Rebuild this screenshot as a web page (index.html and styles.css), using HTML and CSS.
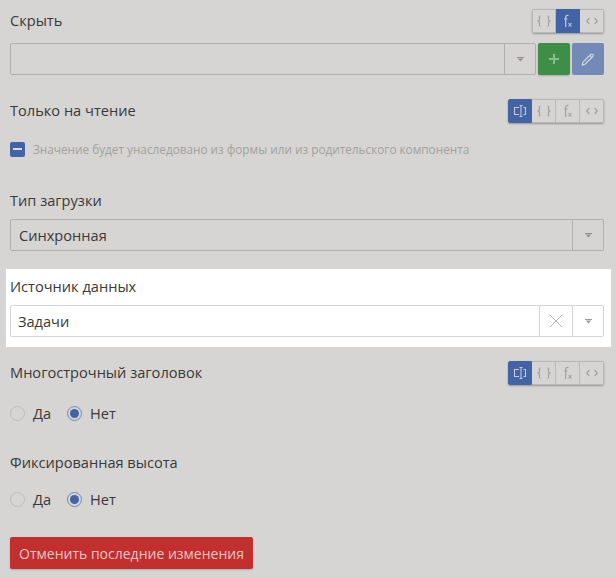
FILE: index.html
```html
<!DOCTYPE html>
<html lang="ru">
<head>
<meta charset="utf-8">
<title>Настройки</title>
<link rel="stylesheet" href="styles.css">
</head>
<body>
<svg class="defs" width="0" height="0" aria-hidden="true">
  <symbol id="i-comp" viewBox="0 0 24 24"><path d="M11 8.500H6.500V15.500H11M11.500 6.500H13M13 6.500H14.500M13 6.500V17.500M11.500 17.500H14.500M15.500 8.500H17.500V15.500H15.500" fill="none" stroke="currentColor" stroke-width="1.100"/></symbol>
  <symbol id="i-braces" viewBox="0 0 24 24"><path d="M8.500 7C7 7 7.500 8.800 7.500 10.200S7.500 11.500 6.300 12C7.500 12.500 7.500 12.400 7.500 13.800S7 17 8.500 17M15.500 7C17 7 16.500 8.800 16.500 10.200S16.500 11.500 17.700 12C16.500 12.500 16.500 12.400 16.500 13.800S17 17 15.500 17" fill="none" stroke="currentColor" stroke-width="1.200"/></symbol>
  <symbol id="i-fx" viewBox="0 0 24 24"><path d="M12.500 6.500C10.500 6.200 9.700 6.800 9.700 8.300V18M8 10H11.500" fill="none" stroke="currentColor" stroke-width="1.200"/><path d="M12.500 14L15.500 17.500M15.500 14L12.500 17.500" fill="none" stroke="currentColor" stroke-width="1.100"/></symbol>
  <symbol id="i-code" viewBox="0 0 24 24"><path d="M9.300 9L6.800 12L9.300 15M14.700 9L17.200 12L14.700 15" fill="none" stroke="currentColor" stroke-width="1.200"/></symbol>
  <symbol id="i-caret" viewBox="0 0 7 5"><path d="M0 0H7V1H0ZM.8 1.600H6.200L3.500 4.600Z" fill="currentColor"/></symbol>
</svg>
<main class="form">
  <section class="field field-hide">
    <div class="head">
      <span class="label">Скрыть</span>
      <div class="modes">
        <button class="mode"><svg class="glyph"><use href="#i-braces"/></svg></button>
        <button class="mode active"><svg class="glyph"><use href="#i-fx"/></svg></button>
        <button class="mode"><svg class="glyph"><use href="#i-code"/></svg></button>
      </div>
    </div>
    <div class="input-row">
      <div class="select">
        <span class="value"></span>
        <span class="cell"><svg class="caret"><use href="#i-caret"/></svg></span>
      </div>
      <button class="square green"><svg class="square-icon" viewBox="0 0 16 16"><path d="M8 3V13M3 8H13" fill="none" stroke="currentColor" stroke-width="2"/></svg></button>
      <button class="square blue"><svg class="square-icon" viewBox="0 0 16 16"><path d="M3 11.200L10.700 3.500C11.300 2.900 12.200 2.900 12.800 3.500C13.400 4.100 13.400 5 12.800 5.600L5 13.200L2.300 13.900ZM9.700 4.500L11.800 6.600" fill="none" stroke="currentColor" stroke-width="1.100"/></svg></button>
    </div>
  </section>

  <section class="field field-readonly">
    <div class="head">
      <span class="label">Только на чтение</span>
      <div class="modes">
        <button class="mode active"><svg class="glyph"><use href="#i-comp"/></svg></button>
        <button class="mode"><svg class="glyph"><use href="#i-braces"/></svg></button>
        <button class="mode"><svg class="glyph"><use href="#i-fx"/></svg></button>
        <button class="mode"><svg class="glyph"><use href="#i-code"/></svg></button>
      </div>
    </div>
    <div class="inherit">
      <span class="check"></span>
      <span class="hint">Значение будет унаследовано из формы или из родительского компонента</span>
    </div>
  </section>

  <section class="field field-load">
    <div class="label-line"><span class="label">Тип загрузки</span></div>
    <div class="select">
      <span class="value">Синхронная</span>
      <span class="cell"><svg class="caret"><use href="#i-caret"/></svg></span>
    </div>
  </section>

  <section class="highlight">
    <div class="label-line"><span class="label">Источник данных</span></div>
    <div class="select select-light">
      <span class="value value-tight">Задачи</span>
      <span class="cell cell-wide"><svg class="cross" viewBox="0 0 14 14"><path d="M1 1L13 13M13 1L1 13" fill="none" stroke="currentColor" stroke-width="1"/></svg></span>
      <span class="cell"><svg class="caret"><use href="#i-caret"/></svg></span>
    </div>
  </section>

  <section class="field field-multi">
    <div class="head">
      <span class="label">Многострочный заголовок</span>
      <div class="modes">
        <button class="mode active"><svg class="glyph"><use href="#i-comp"/></svg></button>
        <button class="mode"><svg class="glyph"><use href="#i-braces"/></svg></button>
        <button class="mode"><svg class="glyph"><use href="#i-fx"/></svg></button>
        <button class="mode"><svg class="glyph"><use href="#i-code"/></svg></button>
      </div>
    </div>
    <div class="radios">
      <span class="radio-item"><span class="radio"></span>Да</span>
      <span class="radio-item"><span class="radio on"></span>Нет</span>
    </div>
  </section>

  <section class="field field-fixed">
    <div class="label-line"><span class="label">Фиксированная высота</span></div>
    <div class="radios">
      <span class="radio-item"><span class="radio"></span>Да</span>
      <span class="radio-item"><span class="radio on"></span>Нет</span>
    </div>
  </section>

  <button class="revert">Отменить последние изменения</button>
</main>
</body>
</html>
```
FILE: styles.css
```css
* { box-sizing: border-box; }
html, body { margin: 0; padding: 0; }
body {
  width: 616px;
  height: 578px;
  overflow: hidden;
  background: #d6d5d3;
  color: #393939;
  font-family: "Open Sans", "Liberation Sans", sans-serif;
  font-size: 14.6px;
}
.defs { position: absolute; }
button { font-family: inherit; padding: 0; margin: 0; }
.form {
  display: flex;
  flex-direction: column;
  padding: 9px 12px 0 10px;
}
.head {
  display: flex;
  justify-content: space-between;
  align-items: center;
  height: 24px;
}
.label { font-size: 14.6px; line-height: 22px; padding-bottom: 2px; }
.label-line { height: 24px; display: flex; align-items: center; }
.modes {
  display: flex;
  box-shadow: 0 1px 2px rgba(0, 0, 0, .3);
  border-radius: 2px;
}
.mode {
  width: 24px;
  height: 24px;
  background: #d6d5d3;
  border: 1px solid #b8b7b5;
  border-left-width: 0;
  color: #a0a09f;
  display: flex;
  align-items: center;
  justify-content: center;
}
.mode:first-child { border-left-width: 1px; border-radius: 2px 0 0 2px; }
.mode:last-child { border-radius: 0 2px 2px 0; }
.mode.active {
  background: #4463a4;
  border-color: #4463a4;
  color: #c3cbdd;
}
.glyph { width: 24px; height: 24px; flex: none; }
.input-row {
  display: flex;
  gap: 2px;
  margin-top: 10px;
}
.input-row .select { flex: 1; }
.select {
  display: flex;
  height: 32px;
  border: 1px solid #b0afad;
  border-radius: 2px;
  align-items: stretch;
}
.value {
  flex: 1;
  padding-left: 8px;
  font-size: 14.6px;
  line-height: 31px;
}
.value-tight { padding-left: 7px; }
.cell {
  width: 31px;
  border-left: 1px solid #b0afad;
  display: flex;
  align-items: center;
  justify-content: center;
  color: #8f8f8e;
}
.cell-wide { width: 33px; }
.caret { width: 7px; height: 5px; }
.cross { width: 14px; height: 14px; color: #b4b4b4; }
.square {
  width: 32px;
  height: 32px;
  border: 0;
  border-radius: 2px;
  display: flex;
  align-items: center;
  justify-content: center;
  box-shadow: 0 1px 2px rgba(0, 0, 0, .2);
}
.square-icon { width: 16px; height: 16px; }
.green { background: #3e8e47; color: #8dbb92; }
.blue { background: #7389b6; color: #d5dbe8; box-shadow: none; }
.field-readonly { margin-top: 24px; }
.inherit {
  display: flex;
  align-items: center;
  margin-top: 18px;
  height: 16px;
}
.check {
  width: 15px;
  height: 15px;
  border-radius: 2px;
  background: #4463a4;
  position: relative;
  margin-right: 8px;
}
.check::after {
  content: "";
  position: absolute;
  left: 3px;
  right: 3px;
  top: 6px;
  height: 2px;
  background: #d7dcea;
}
.hint { font-size: 11.77px; color: #a1a1a0; }
.field-load { margin-top: 32px; }
.field-load .select { margin-top: 6px; }
.highlight {
  margin: 18px -7px 0 -4px;
  padding: 5px 7px 10px 4px;
  background: #fff;
}
.highlight .label-line { padding-top: 2px; }
.highlight .select { margin-top: 7px; }
.select-light { border-color: #d4d4d4; }
.select-light .cell { border-left-color: #d4d4d4; color: #9a9a9a; }
.field-multi { margin-top: 14px; }
.radios {
  display: flex;
  align-items: center;
  gap: 16px;
  height: 24px;
  margin-top: 16px;
}
.radio-item { display: flex; align-items: center; gap: 8px; font-size: 14.6px; }
.radio {
  width: 15px;
  height: 15px;
  border-radius: 50%;
  border: 1px solid #bdbcba;
}
.radio.on {
  border-color: #6f88ba;
  position: relative;
}
.radio.on::after {
  content: "";
  position: absolute;
  left: 2px;
  top: 2px;
  width: 9px;
  height: 9px;
  border-radius: 50%;
  background: #4463a4;
}
.field-fixed { margin-top: 26px; }
.field-fixed .radios { margin-top: 12px; }
.revert {
  align-self: flex-start;
  width: 243px;
  height: 32px;
  margin-top: 26px;
  border: 0;
  border-radius: 2px;
  background: #c12f2f;
  color: #e9c4c3;
  font-size: 14px;
  font-weight: 400;
  box-shadow: 0 1px 2px rgba(0, 0, 0, .2);
}
```
